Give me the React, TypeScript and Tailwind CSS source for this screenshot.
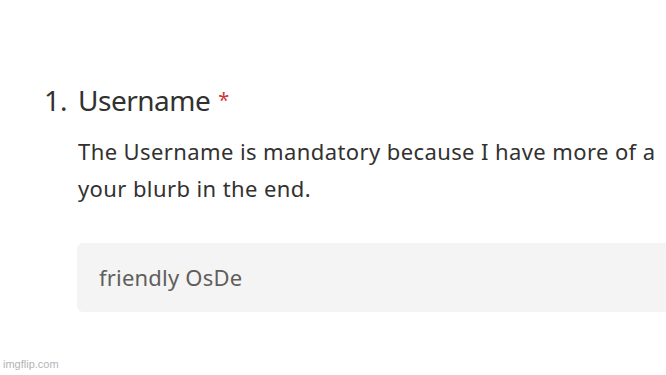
export default function App() {
  return (
    <div
      className="relative h-[375px] w-full overflow-hidden bg-white text-[#323130]"
      style={{ fontFamily: '"Noto Sans", "Open Sans", Arial, sans-serif' }}
    >
      <div className="pl-[44px] pt-[80px]">
        {/* question title */}
        <div className="flex h-[40px] items-baseline whitespace-nowrap text-[28px] leading-[40px]">
          <span className="w-[34px]">1.</span>
          <span className="tracking-[-0.5px]">Username</span>
          <span className="ml-[8px] -translate-y-[4px] text-[20px] leading-none text-[#d13438]">*</span>
        </div>

        {/* description */}
        <p className="ml-[34px] mt-[13px] whitespace-nowrap text-[22px] leading-[37px] tracking-[0.4px]">
          The Username is mandatory because I have more of a
          <br />
          your blurb in the end.
        </p>

        {/* answer box */}
        <div className="ml-[33px] mt-[36px] flex h-[69px] w-[640px] items-center rounded-md bg-[#f4f4f4] px-[22px]">
          <span className="text-[22px] tracking-[0.2px] text-[#605e5c]">friendly OsDe</span>
        </div>
      </div>

      <div
        className="absolute bottom-[3px] left-[3px] text-[11px] text-[#b3b3b3]"
        style={{ fontFamily: '"Liberation Sans", Arial, sans-serif' }}
      >
        imgflip.com
      </div>
    </div>
  );
}
